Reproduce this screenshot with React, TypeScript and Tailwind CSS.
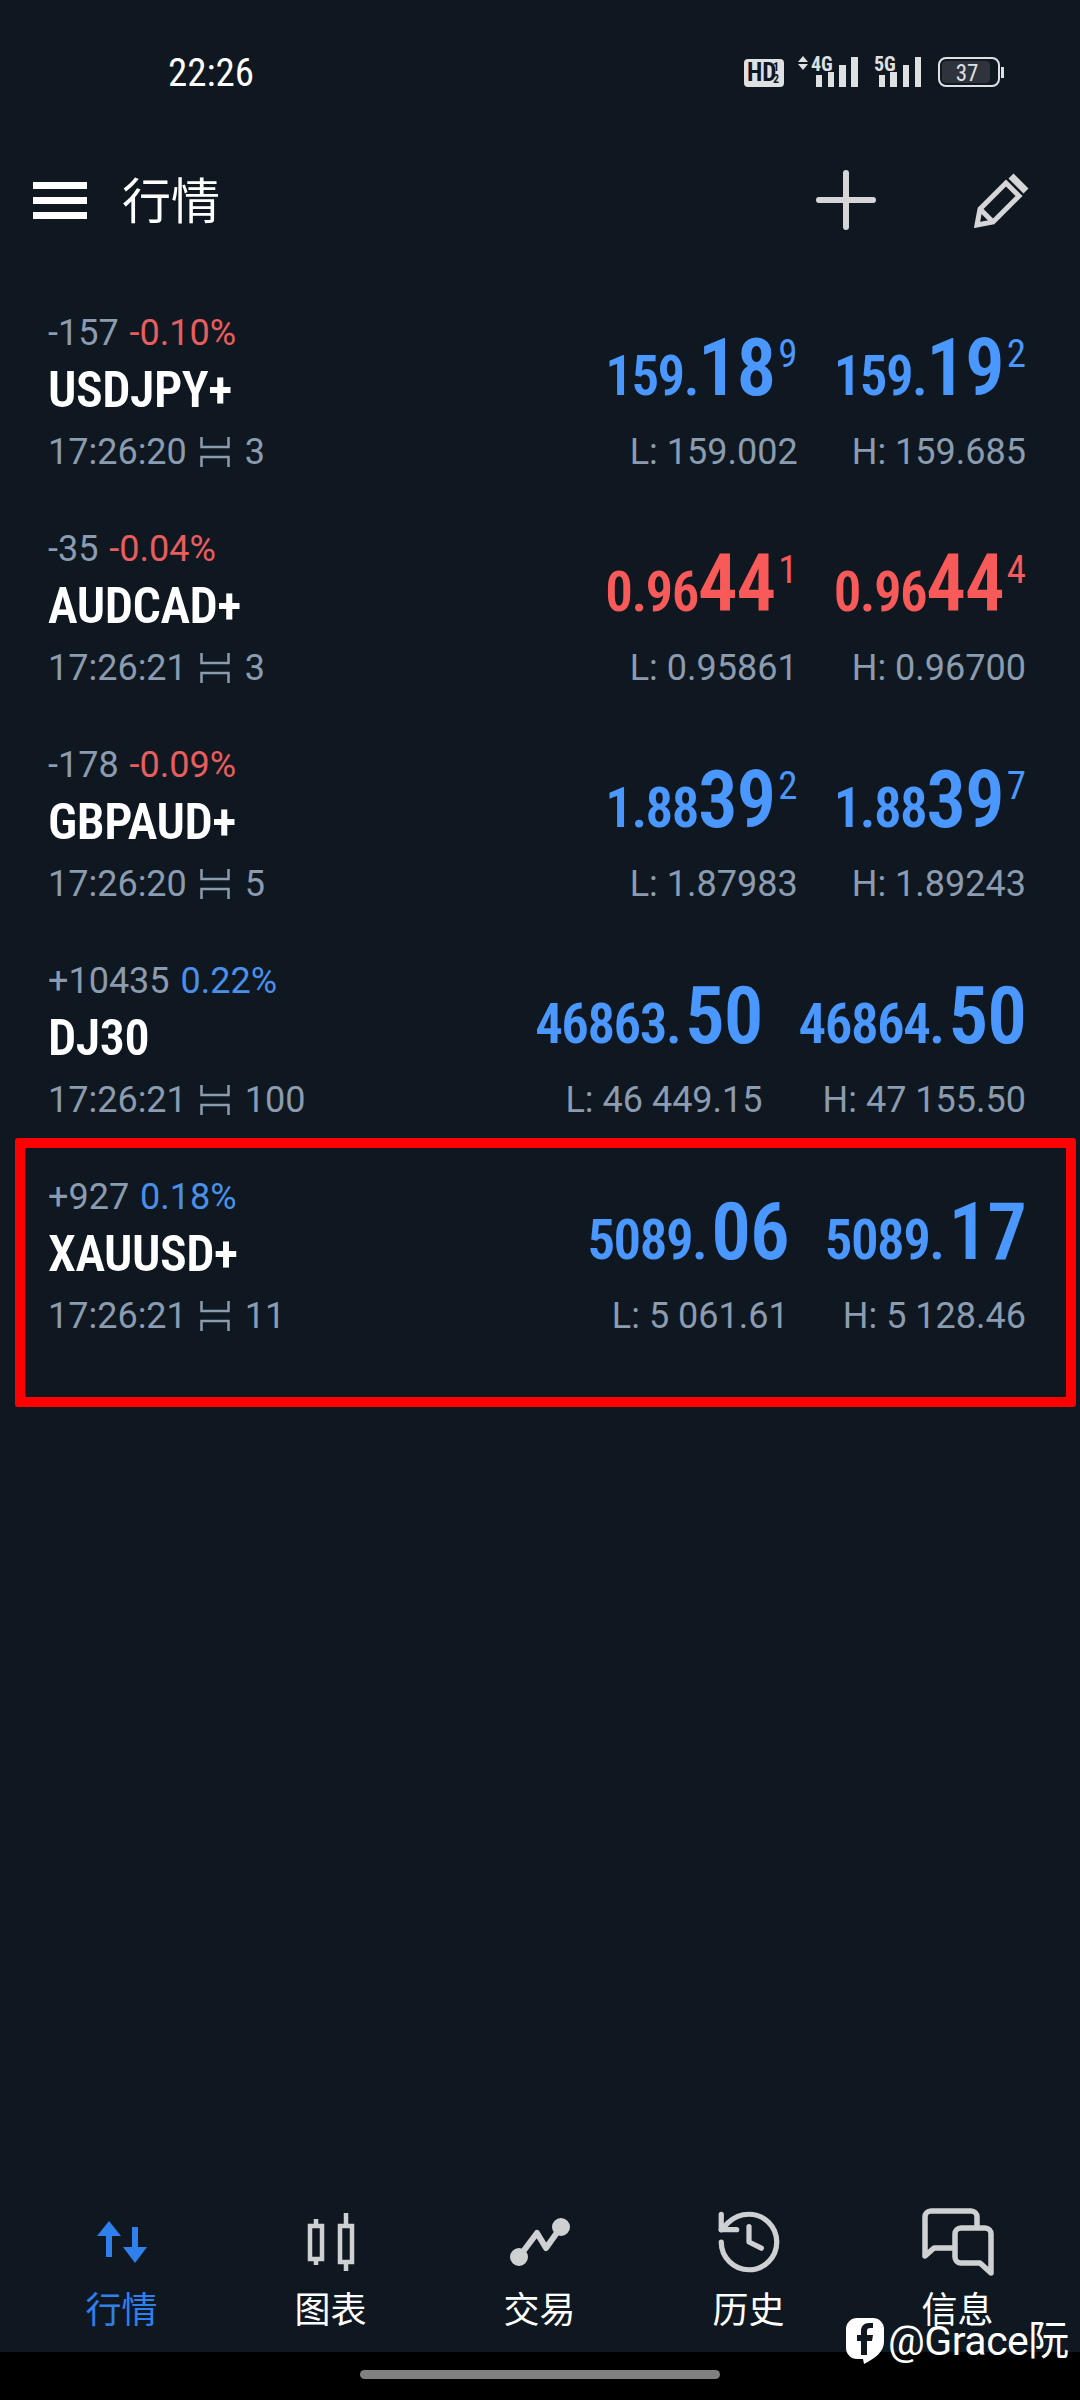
import { History } from 'lucide-react'

type Quote = {
    change: string
    pct: string
    pctColor: string
    symbol: string
    time: string
    spread: string
    bid: [string, string, string?]
    ask: [string, string, string?]
    low: string
    high: string
    priceColor: string
}

const blue = 'text-[#4a97ff]'
const red = 'text-[#f85a5a]'

const quotes: Quote[] = [
    { change: '-157', pct: '-0.10%', pctColor: 'text-[#e85d5d]', symbol: 'USDJPY+', time: '17:26:20', spread: '3', bid: ['159.', '18', '9'], ask: ['159.', '19', '2'], low: 'L: 159.002', high: 'H: 159.685', priceColor: blue },
    { change: '-35', pct: '-0.04%', pctColor: 'text-[#e85d5d]', symbol: 'AUDCAD+', time: '17:26:21', spread: '3', bid: ['0.96', '44', '1'], ask: ['0.96', '44', '4'], low: 'L: 0.95861', high: 'H: 0.96700', priceColor: red },
    { change: '-178', pct: '-0.09%', pctColor: 'text-[#e85d5d]', symbol: 'GBPAUD+', time: '17:26:20', spread: '5', bid: ['1.88', '39', '2'], ask: ['1.88', '39', '7'], low: 'L: 1.87983', high: 'H: 1.89243', priceColor: blue },
    { change: '+10435', pct: '0.22%', pctColor: 'text-[#4a90e8]', symbol: 'DJ30', time: '17:26:21', spread: '100', bid: ['46863.', '50'], ask: ['46864.', '50'], low: 'L: 46 449.15', high: 'H: 47 155.50', priceColor: blue },
    { change: '+927', pct: '0.18%', pctColor: 'text-[#4a90e8]', symbol: 'XAUUSD+', time: '17:26:21', spread: '11', bid: ['5089.', '06'], ask: ['5089.', '17'], low: 'L: 5 061.61', high: 'H: 5 128.46', priceColor: blue },
]

const narrow = "font-['Roboto',sans-serif] [font-stretch:75%]"

function SpreadIcon() {
    return (
        <svg width="30" height="30" viewBox="0 0 30 30" fill="none" stroke="#8b9bb0" strokeWidth="2.5">
            <path d="M1.5 0V10H28.5V0" />
            <path d="M1.5 30V20H28.5V30" />
        </svg>
    )
}

function Price({ parts, color }: { parts: [string, string, string?]; color: string }) {
    return (
        <div className={`h-[66px] leading-[66px] whitespace-nowrap font-semibold ${narrow} ${color}`}>
            <span className="text-[55px] tracking-[-1.5px]">{parts[0]}</span>
            <span className={`text-[79px] tracking-[-1px] ${parts[2] ? 'ml-0' : 'ml-[5px]'}`}>{parts[1]}</span>
            {parts[2] && <span className="text-[39px] font-normal ml-[3px] leading-none align-[28px]">{parts[2]}</span>}
        </div>
    )
}

function QuoteRow({ q }: { q: Quote }) {
    return (
        <div className="h-[216px] pt-[23px] pl-[48px] pr-[54px] flex justify-between">
            <div className="flex flex-col">
                <div className="h-[44px] leading-[44px] text-[36px] text-[#8b9bb0] whitespace-nowrap">
                    {q.change} <span className={`ml-[2px] ${q.pctColor}`}>{q.pct}</span>
                </div>
                <div className={`h-[66px] leading-[70px] text-[50px] tracking-[-0.5px] font-semibold text-white ${narrow}`}>{q.symbol}</div>
                <div className="mt-[9px] h-[44px] leading-[44px] text-[36px] text-[#8b9bb0] flex items-center whitespace-nowrap">
                    {q.time}
                    <span className="ml-[13px] mr-[15px]"><SpreadIcon /></span>
                    {q.spread}
                </div>
            </div>
            <div className="flex gap-[36px] pt-[24px]">
                <div className="flex flex-col items-end">
                    <Price parts={q.bid} color={q.priceColor} />
                    <div className="mt-[29px] h-[44px] leading-[44px] text-[36px] text-[#8b9bb0] whitespace-nowrap">{q.low}</div>
                </div>
                <div className="flex flex-col items-end">
                    <Price parts={q.ask} color={q.priceColor} />
                    <div className="mt-[29px] h-[44px] leading-[44px] text-[36px] text-[#8b9bb0] whitespace-nowrap">{q.high}</div>
                </div>
            </div>
        </div>
    )
}

function StatusIcons() {
    return (
        <svg width="264" height="34" viewBox="0 0 264 34" fill="#dfe0e2" className={`mt-[6px] overflow-visible ${narrow}`}>
            <rect x="0" y="3" width="40" height="28" rx="4" />
            <text x="3" y="25" fontSize="25" fontWeight="700" fill="#0f1821">HD</text>
            <text x="29" y="15" fontSize="12" fontWeight="700" fill="#0f1821">1</text>
            <text x="29" y="27" fontSize="12" fontWeight="700" fill="#0f1821">2</text>

            <path d="M54 6L59 0L64 6Z M54 8L59 14L64 8Z" />
            <text x="67" y="15" fontSize="20" fontWeight="700">4G</text>
            <rect x="72" y="19" width="6" height="12" />
            <rect x="84" y="16" width="6" height="15" />
            <rect x="95" y="9" width="7" height="22" />
            <rect x="107" y="1" width="7" height="30" />

            <text x="130" y="15" fontSize="20" fontWeight="700">5G</text>
            <rect x="135" y="19" width="6" height="12" />
            <rect x="146" y="16" width="7" height="15" />
            <rect x="159" y="9" width="6" height="22" />
            <rect x="171" y="1" width="6" height="30" />

            <rect x="195" y="2" width="60" height="28" rx="7" fill="none" stroke="#dfe0e2" strokeWidth="2" />
            <rect x="198" y="5" width="48" height="22" rx="4" fill="#2e333c" />
            <rect x="257" y="11" width="3" height="11" />
            <text x="223" y="25" fontSize="23" textAnchor="middle">37</text>
        </svg>
    )
}

function MarketIcon() {
    return (
        <svg width="50" height="42" viewBox="0 0 50 42" fill="#2f80ed">
            <path d="M12 0L24 15H15V36H9V15H0Z" />
            <path d="M38 42L26 26H35V6H41V26H50Z" />
        </svg>
    )
}

function ChartIcon() {
    return (
        <svg width="48" height="58" viewBox="0 0 48 58" fill="none" stroke="#cfd0d2" strokeWidth="4.5">
            <path d="M9 6V12M9 46V52M39 0V12M39 49V58" />
            <rect x="3" y="13" width="12" height="33" />
            <rect x="33" y="13" width="12" height="36" />
        </svg>
    )
}

function TradeIcon() {
    return (
        <svg width="60" height="48" viewBox="0 0 60 48" fill="none" stroke="#cfd0d2" strokeWidth="6" strokeLinecap="round" strokeLinejoin="round">
            <path d="M9 39L27 15L36 30L51 9" />
            <circle cx="9" cy="39" r="7" fill="#cfd0d2" strokeWidth="4" />
            <circle cx="51" cy="9" r="7" fill="#cfd0d2" strokeWidth="4" />
        </svg>
    )
}

function MessageIcon() {
    return (
        <svg width="72" height="68" viewBox="0 0 72 68" fill="none" stroke="#cfd0d2" strokeWidth="5.5" strokeLinejoin="round">
            <path d="M55 18V9a6 6 0 0 0-6-6H9a6 6 0 0 0-6 6V48L12 40H32" />
            <path d="M39 20H63a6 6 0 0 1 6 6V65L58 55H39a6 6 0 0 1-6-6V26a6 6 0 0 1 6-6Z" />
        </svg>
    )
}

function NavItem({ icon, label, active }: { icon: React.ReactNode; label: string; active?: boolean }) {
    return (
        <div className="w-[209px] flex flex-col items-center">
            <div className="h-[72px] flex items-center justify-center">{icon}</div>
            <div className={`mt-[10px] h-[46px] leading-[46px] text-[36px] ${active ? 'text-[#2f80ed]' : 'text-white'}`}>{label}</div>
        </div>
    )
}

export default function App() {
    return (
        <div className="relative w-[1080px] h-[2400px] flex flex-col bg-[#0f1821] font-['Roboto','Noto_Sans_CJK_SC',sans-serif] overflow-hidden">
            <div className="h-[112px] pl-[168px] pr-[72px] pt-[50px] flex justify-between items-start">
                <span className="font-['Roboto',sans-serif] [font-stretch:85%] text-[39px] leading-[46px] text-white">22:26</span>
                <StatusIcons />
            </div>

            <div className="h-[176px] pl-[33px] pr-[50px] flex items-center justify-between">
                <div className="flex items-center">
                    <div className="w-[54px] flex flex-col gap-[8px]">
                        <div className="h-[7px] bg-white" />
                        <div className="h-[7px] bg-white" />
                        <div className="h-[7px] bg-white" />
                    </div>
                    <span className="ml-[35px] mt-[4px] text-[49px] text-white leading-none">行情</span>
                </div>
                <div className="flex items-center gap-[98px]">
                    <svg width="60" height="60" viewBox="0 0 60 60" stroke="#d6d6d8" strokeWidth="6" strokeLinecap="round">
                        <path d="M30 3V57M3 30H57" />
                    </svg>
                    <svg width="56" height="56" viewBox="0 0 56 56" fill="none" stroke="#d6d6d8" strokeWidth="5">
                        <path d="M3 53L6 37L32 11L45 24L19 50Z" />
                        <path d="M6 37L19 50" />
                        <path d="M37 4L52 19" strokeWidth="7" />
                    </svg>
                </div>
            </div>

            <div className="flex-1">
                {quotes.map((q) => (
                    <QuoteRow key={q.symbol} q={q} />
                ))}
            </div>

            <div className="px-[17px] flex h-[152px] pt-[6px]">
                <NavItem icon={<MarketIcon />} label="行情" active />
                <NavItem icon={<ChartIcon />} label="图表" />
                <NavItem icon={<TradeIcon />} label="交易" />
                <NavItem icon={<History size={74} strokeWidth={1.7} color="#cfd0d2" />} label="历史" />
                <NavItem icon={<MessageIcon />} label="信息" />
            </div>

            <div className="h-[48px] bg-black flex justify-center pt-[18px]">
                <div className="w-[360px] h-[9px] rounded-full bg-[#808080]" />
            </div>

            {/* red annotation round the last row */}
            <div className="absolute left-[15px] top-[1138px] w-[1061px] h-[269px] border-[10px] border-[#ff0000] rounded-[3px]" />

            {/* watermark */}
            <div className="absolute left-[846px] top-[2318px] flex items-center text-white">
                <svg width="38" height="46" viewBox="0 0 38 46">
                    <path d="M11 0H27a11 11 0 0 1 11 11V24C38 34 28 41 18 46L17 41H11A11 11 0 0 1 0 30V11A11 11 0 0 1 11 0Z" fill="#fff" />
                    <path d="M21 37V23H26L27 17H21V13C21 11 22 10 24 10H27V5H23C18 5 15 8 15 13V17H11V23H15V37Z" fill="#0f1821" />
                </svg>
                <span className="ml-[4px] text-[41px] leading-none tracking-[-0.5px]">@Grace阮</span>
            </div>
        </div>
    )
}
